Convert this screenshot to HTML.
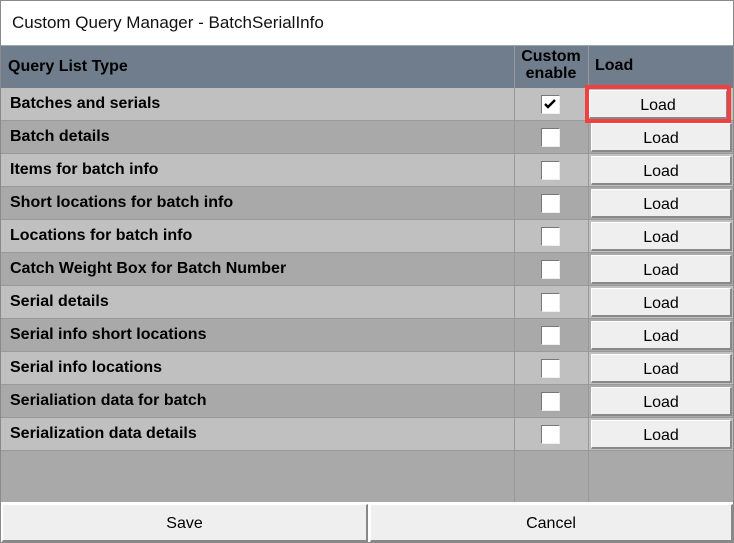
<!DOCTYPE html>
<html><head><style>
*{margin:0;padding:0;box-sizing:border-box}
body{width:734px;height:543px;background:#fff;font-family:"Liberation Sans",Arial,sans-serif;position:relative;overflow:hidden}
.frame{position:absolute;left:0;top:0;width:734px;height:543px;border:1px solid #8a8a8a}
.title{position:absolute;left:12px;top:13px;font-size:17px;color:#111}
.hdr{position:absolute;left:1px;top:45px;width:732px;height:43px;background:#6f7d8c;border-top:1px solid #9aa}
.hdr div{position:absolute;font-weight:bold;font-size:16px;color:#000}
.row{position:absolute;left:1px;width:732px;height:33px;border-bottom:1px solid #999}
.row span{position:absolute;left:9px;top:7px;font-weight:bold;font-size:16px;color:#000}
.l{background:#c0c0c0}.d{background:#a9a9a9}
.vl{position:absolute;width:1px;background:#999;top:45px;height:457px}
.cb{position:absolute;left:541px;width:19px;height:19px;background:#fff;border:1px solid #777;border-right-color:#eee;border-bottom-color:#eee}
.btn{position:absolute;left:591px;width:141px;height:29px;background:#efefef;border:1px solid #fff;border-right:2px solid #888;border-bottom:2px solid #888;font-size:16px;text-align:center;line-height:30px;color:#000}
.red{position:absolute;left:585px;top:85px;width:146px;height:38px;border:4px solid #f04040}
.empty{position:absolute;left:1px;top:451px;width:732px;height:51px;background:#a9a9a9}
.bb{position:absolute;top:504px;height:38px;background:#efefef;border:1px solid #fff;border-right:2px solid #888;border-bottom:2px solid #888;font-size:16px;text-align:center;line-height:38px}
</style></head><body>
<div class="title">Custom Query Manager - BatchSerialInfo</div>
<div class="hdr">
<div style="left:7px;top:12px">Query List Type</div>
<div style="left:516px;top:2px;line-height:17px;text-align:center;width:68px">Custom<br>enable</div>
<div style="left:594px;top:11px">Load</div>
</div>
<div class="row l" style="top:88px"><span>Batches and serials</span></div>
<div class="row d" style="top:121px"><span>Batch details</span></div>
<div class="row l" style="top:154px"><span>Items for batch info</span></div>
<div class="row d" style="top:187px"><span>Short locations for batch info</span></div>
<div class="row l" style="top:220px"><span>Locations for batch info</span></div>
<div class="row d" style="top:253px"><span>Catch Weight Box for Batch Number</span></div>
<div class="row l" style="top:286px"><span>Serial details</span></div>
<div class="row d" style="top:319px"><span>Serial info short locations</span></div>
<div class="row l" style="top:352px"><span>Serial info locations</span></div>
<div class="row d" style="top:385px"><span>Serialiation data for batch</span></div>
<div class="row l" style="top:418px"><span>Serialization data details</span></div>
<div class="empty"></div>
<div class="vl" style="left:514px"></div>
<div class="vl" style="left:588px"></div>

<div class="cb" style="top:95px"><svg width="17" height="17" viewBox="0 0 17 17" style="position:absolute;left:0;top:0"><path d="M3 8 L6 11 L13 4" stroke="#000" stroke-width="2.4" fill="none"/></svg></div>
<div class="cb" style="top:128px"></div>
<div class="cb" style="top:161px"></div>
<div class="cb" style="top:194px"></div>
<div class="cb" style="top:227px"></div>
<div class="cb" style="top:260px"></div>
<div class="cb" style="top:293px"></div>
<div class="cb" style="top:326px"></div>
<div class="cb" style="top:359px"></div>
<div class="cb" style="top:392px"></div>
<div class="cb" style="top:425px"></div>

<div class="btn" style="top:90px;left:589px;width:139px">Load</div>
<div class="btn" style="top:123px">Load</div>
<div class="btn" style="top:156px">Load</div>
<div class="btn" style="top:189px">Load</div>
<div class="btn" style="top:222px">Load</div>
<div class="btn" style="top:255px">Load</div>
<div class="btn" style="top:288px">Load</div>
<div class="btn" style="top:321px">Load</div>
<div class="btn" style="top:354px">Load</div>
<div class="btn" style="top:387px">Load</div>
<div class="btn" style="top:420px">Load</div>
<div class="red"></div>

<div class="bb" style="left:2px;width:366px">Save</div>
<div class="bb" style="left:370px;width:363px">Cancel</div>
<div class="frame"></div>
</body></html>
